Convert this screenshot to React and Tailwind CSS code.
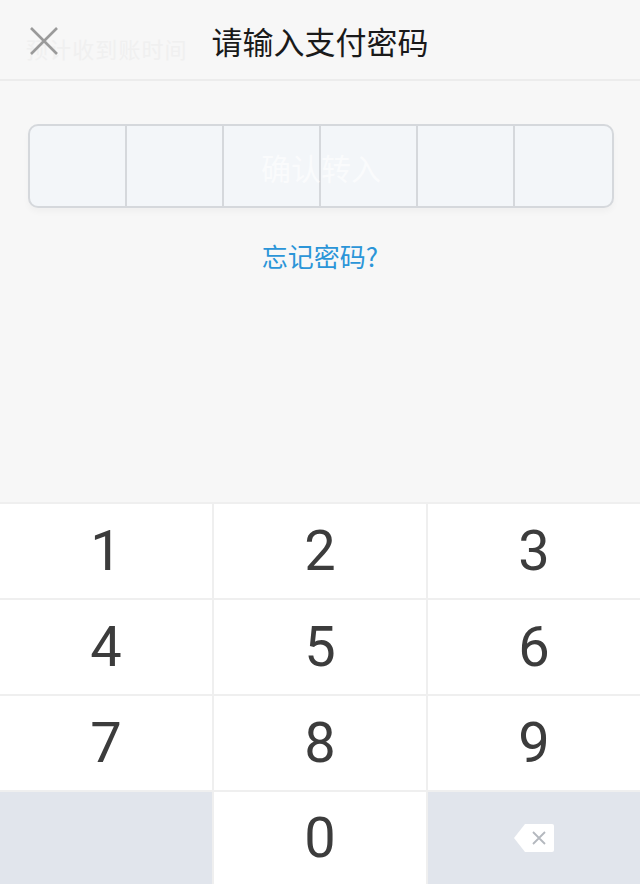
const KEYS = ['1', '2', '3', '4', '5', '6', '7', '8', '9']

function Key({ label }) {
  return (
    <div className="h-[94px] bg-white flex items-center justify-center text-[56px] text-[#3c3c3c] leading-none" style={{ fontFamily: 'Roboto, sans-serif' }}>
      {label}
    </div>
  )
}

export default function App() {
  return (
    <div className="w-[640px] h-[884px] bg-[#f7f7f7] flex flex-col overflow-hidden" style={{ fontFamily: '"Noto Sans CJK SC", "Noto Sans", sans-serif' }}>
      {/* Header */}
      <div className="relative h-[81px] border-b-2 border-[#ececec] flex items-center justify-center shrink-0">
        <span className="absolute left-[26px] top-[32px] text-[22px] text-[#f0f0f0] tracking-wider">预计收到账时间</span>
        <svg className="absolute left-[28px] top-[25px]" width="32" height="32" viewBox="0 0 32 32">
          <path d="M3 3 L29 29 M29 3 L3 29" stroke="#9a9a9a" strokeWidth="2.6" />
        </svg>
        <h1 className="relative text-[31px] text-[#1a1a1a] mt-[3px]">请输入支付密码</h1>
      </div>

      {/* Password boxes */}
      <div className="pl-[28px] pt-[43px]">
        <div className="relative w-[586px] h-[84px] rounded-[10px] border-2 border-[#d5d8dc] bg-[#f3f6f9] grid grid-cols-6 overflow-hidden shadow-[0_4px_6px_rgba(0,0,0,0.03)]">
          {[0, 1, 2, 3, 4, 5].map(i => (
            <div key={i} className={i < 5 ? 'border-r-2 border-[#d5d8dc]' : ''} />
          ))}
          <span className="absolute inset-0 flex items-center justify-center text-[30px] text-white/60 pt-[2px]">确认转入</span>
        </div>
      </div>

      <div className="flex justify-center pt-[28px]">
        <span className="text-[26px] text-[#2b95d8]">忘记密码?</span>
      </div>

      <div className="flex-1" />

      {/* Keypad */}
      <div className="grid grid-cols-3 gap-[2px] bg-[#efefef] pt-[2px] shrink-0">
        {KEYS.map(k => <Key key={k} label={k} />)}
        <div className="h-[92px] bg-[#e1e5ec]" />
        <div className="h-[92px] bg-white flex items-center justify-center text-[56px] text-[#3c3c3c] leading-none" style={{ fontFamily: 'Roboto, sans-serif' }}>0</div>
        <div className="h-[92px] bg-[#e1e5ec] flex items-center justify-center">
          <svg width="42" height="30" viewBox="0 0 42 30">
            <path d="M12 1 H39 a2 2 0 0 1 2 2 V27 a2 2 0 0 1 -2 2 H12 L1 15 Z" fill="#ffffff" />
            <path d="M20 9 L32 21 M32 9 L20 21" stroke="#b4b8be" strokeWidth="1.8" />
          </svg>
        </div>
      </div>
    </div>
  )
}
